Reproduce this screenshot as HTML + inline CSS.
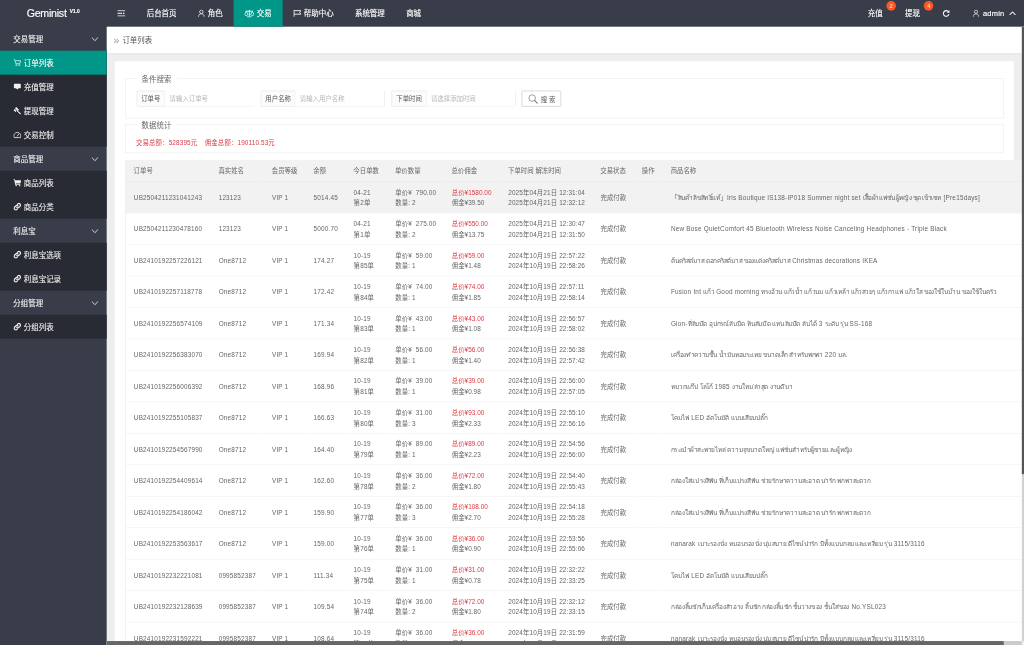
<!DOCTYPE html>
<html lang="zh-CN">
<head>
<meta charset="utf-8">
<title>订单列表</title>
<style>
html,body{margin:0;padding:0;width:1024px;height:645px;overflow:hidden;background:#fff}
#app{position:absolute;left:0;top:0;width:1940px;height:1230px;transform:scale(.5333333);transform-origin:0 0;font-family:"Liberation Sans","Noto Sans CJK SC",sans-serif;font-size:14px;color:#666;overflow:hidden;background:#eee;line-height:1;filter:blur(.45px)}
#app *{box-sizing:border-box}
svg{display:block}
/* header */
.header{position:absolute;left:0;top:0;width:1940px;height:50px;background:#393d49;color:#fff;-webkit-text-stroke:.25px #fff}
.logo{position:absolute;left:0;top:0;width:200px;height:50px;line-height:50px;color:#fff;font-size:20px;white-space:nowrap}
.logo b{position:absolute;left:50px;top:0;font-weight:normal;letter-spacing:-.5px}
.logo sup{position:absolute;left:131px;top:17px;font-size:9px;font-weight:bold;line-height:9px}
.nav{position:absolute;left:200px;top:0;height:50px;display:flex}
.nav .it{height:50px;line-height:50px;padding:0 20px;color:#fff;font-size:14px;white-space:nowrap;display:flex;align-items:center}
.nav .it svg{margin-right:6px}
.nav .it.on{background:#009688}
.rnav .t{position:absolute;top:0;height:50px;line-height:50px;color:#fff;font-size:14px;white-space:nowrap}
.badge{position:absolute;top:2px;width:18px;height:18px;border-radius:9px;background:#ff5722;color:rgba(255,255,255,.88);font-size:11px;line-height:18px;text-align:center;-webkit-text-stroke:0}
/* side */
.side{position:absolute;left:0;top:0;padding-top:50px;width:200px;height:1230px;background:#393d49}
.side .p,.side .c{position:relative;height:45px;line-height:45px;font-size:14px;color:rgba(255,255,255,.93);white-space:nowrap;padding-left:25px}
.side .g{background:#282b33}
.side .c{display:flex;align-items:center}
.side .c svg{margin-right:4.500px}
.side span{position:relative;top:1px;-webkit-text-stroke:.2px rgba(255,255,255,.9)}
.side .c.on{background:#009688;color:#fff}
.side .p .arr{position:absolute;left:171px;top:19px}
/* body */
.crumb{position:absolute;left:200px;top:50px;width:1716px;height:50px;background:#fff;box-shadow:0 1px 2px rgba(0,0,0,.08);line-height:50px;font-size:14px;color:#555;white-space:nowrap}
.crumb span{position:absolute;left:13px;top:0;color:#999;font-size:20px}
.crumb b{position:absolute;left:29.500px;top:0;font-weight:normal}
.card{position:absolute;left:215px;top:115px;width:1686px;height:1200px;background:#fff}
.fs{position:absolute;left:235px;width:1647px;border:1px solid #e9e9e9}
.fs .lg{position:absolute;left:19.500px;top:-9px;height:20px;line-height:20px;padding:0 10px;background:#fff;font-size:14px;color:#666;white-space:nowrap}
.grp{position:absolute;top:170px;height:30px}
.grp .lab{position:absolute;left:0;top:0;height:30px;line-height:31px;border:1px solid #e0e0e0;background:#fcfcfc;font-size:12px;color:#555;text-align:center;white-space:nowrap;border-radius:2px 0 0 2px}
.grp .inp{position:absolute;top:0;height:30px;line-height:31px;border:1px solid #e0e0e0;border-left:none;background:#fff;font-size:12px;color:#b5b5b5;padding-left:8px;white-space:nowrap;border-radius:0 2px 2px 0}
.btn{position:absolute;left:978px;top:170px;width:74px;height:30px;border:1px solid #bbb;border-radius:2px;background:#fff;font-size:12px;color:#555;line-height:28px;white-space:nowrap}
.btn svg{position:absolute;left:11px;top:4.500px}
.btn span{position:absolute;left:35px;top:1.500px}
.stat{position:absolute;top:260.500px;letter-spacing:.24px;font-size:12px;line-height:14px;color:#de3842;white-space:nowrap}
/* table */
table{position:absolute;left:235px;top:300px;width:1681px;border-collapse:collapse;table-layout:fixed;font-size:12px;color:#666}
.tbg{position:absolute;left:234.500px;top:300px;width:1690px;height:930px;background:#fff;border-left:1px solid #e4e4e4}
.tbg i{position:absolute;left:0;top:0;width:1690px;height:99px;background:#f2f2f2}
th{height:40px;font-weight:normal;text-align:left;padding:3px 0 0 15.500px;white-space:nowrap;border-bottom:1px solid #e9e9e9;color:#666}
td{height:59px;padding:3px 0 0 16px;line-height:20px;white-space:nowrap;border-bottom:1px solid #eee;vertical-align:middle;overflow:hidden}
.red{color:#de3842}
.c1,.c2,.c3,.c4{letter-spacing:.3px}
.c5{letter-spacing:.3px}
.c6{letter-spacing:.25px}
.c8{letter-spacing:.22px}
.c7{letter-spacing:.06px}
.c11{letter-spacing:.39px}
/* scrollbars */
.vs{position:absolute;left:1916px;top:50px;width:4px;height:1160px;background:#d2d2d2}
.vs i{position:absolute;left:0;top:0;width:4px;height:839px;background:#555}
.hs{position:absolute;left:200px;top:1202px;width:1716px;height:8px;background:#cbcbcb}
.hs i{position:absolute;left:0;top:0;width:1682px;height:8px;background:#666}
.cn{position:absolute;left:1916px;top:1202px;width:4px;height:8px;background:#eee}
</style>
</head>
<body>
<div id="app">

<div class="card"></div>

<div class="fs" style="top:147px;height:75px"><div class="lg">条件搜索</div></div>
<div class="grp" style="left:255.500px"><div class="lab" style="width:54.500px">订单号</div><div class="inp" style="left:54.500px;width:167px">请输入订单号</div></div>
<div class="grp" style="left:489px"><div class="lab" style="width:65px">用户名称</div><div class="inp" style="left:65px;width:168px">请输入用户名称</div></div>
<div class="grp" style="left:734px"><div class="lab" style="width:66px">下单时间</div><div class="inp" style="left:66px;width:167px">请选择添加时间</div></div>
<div class="btn"><svg width="19" height="19" viewBox="0 0 17 17"><circle cx="7" cy="7" r="5.500" fill="none" stroke="#777" stroke-width="1.200"/><path d="M11 11l4.500 4.500" stroke="#777" stroke-width="1.900" stroke-linecap="round"/></svg><span>搜 索</span></div>

<div class="fs" style="top:233px;height:54px"><div class="lg">数据统计</div></div>
<div class="stat" style="left:255px">交易总额：528395元</div>
<div class="stat" style="left:384px">佣金总额：190110.53元</div>

<div class="tbg"><i></i></div>
<table>
<colgroup><col style="width:159px"><col style="width:100px"><col style="width:78px"><col style="width:75px"><col style="width:78px"><col style="width:106px"><col style="width:106px"><col style="width:173px"><col style="width:78px"><col style="width:54px"><col></colgroup>
<thead><tr><th>订单号</th><th>真实姓名</th><th>会员等级</th><th>余额</th><th>今日单数</th><th>单价数量</th><th>总价佣金</th><th>下单时间 解冻时间</th><th>交易状态</th><th>操作</th><th>商品名称</th></tr></thead>
<tbody>
<tr class="hov"><td class="c1">UB2504211231041243</td><td class="c2">123123</td><td class="c3">VIP 1</td><td class="c4">5014.45</td><td class="c5">04-21<br>第2单</td><td class="c6">单价¥&nbsp; 790.00<br>数量: 2</td><td class="c7"><span class="red">总价¥1580.00</span><br>佣金¥39.50</td><td class="c8">2025年04月21日 12:31:04<br>2025年04月21日 12:32:12</td><td class="c9">完成付款</td><td class="c10"></td><td class="c11">「<span class="th" style="letter-spacing:-0.24px">สินค้าลิขสิทธิ์แท้</span>」Iris Boutique IS138-IP018 Summer night set <span class="th" style="letter-spacing:-0.24px">เสื้อผ้าแฟชั่นผู้หญิง ชุดเข้าเซท</span> [Pre15days]</td></tr>
<tr><td class="c1">UB2504211230478160</td><td class="c2">123123</td><td class="c3">VIP 1</td><td class="c4">5000.70</td><td class="c5">04-21<br>第1单</td><td class="c6">单价¥&nbsp; 275.00<br>数量: 2</td><td class="c7"><span class="red">总价¥550.00</span><br>佣金¥13.75</td><td class="c8">2025年04月21日 12:30:47<br>2025年04月21日 12:31:50</td><td class="c9">完成付款</td><td class="c10"></td><td class="c11">New Bose QuietComfort 45 Bluetooth Wireless Noise Canceling Headphones - Triple Black</td></tr>
<tr><td class="c1">UB2410192257226121</td><td class="c2">One8712</td><td class="c3">VIP 1</td><td class="c4">174.27</td><td class="c5">10-19<br>第85单</td><td class="c6">单价¥&nbsp; 59.00<br>数量: 1</td><td class="c7"><span class="red">总价¥59.00</span><br>佣金¥1.48</td><td class="c8">2024年10月19日 22:57:22<br>2024年10月19日 22:58:26</td><td class="c9">完成付款</td><td class="c10"></td><td class="c11"><span class="th" style="letter-spacing:-0.503px">ต้นคริสต์มาส ดอกคริสต์มาส ของแต่งคริสต์มาส</span> Christmas decorations IKEA</td></tr>
<tr><td class="c1">UB2410192257118778</td><td class="c2">One8712</td><td class="c3">VIP 1</td><td class="c4">172.42</td><td class="c5">10-19<br>第84单</td><td class="c6">单价¥&nbsp; 74.00<br>数量: 1</td><td class="c7"><span class="red">总价¥74.00</span><br>佣金¥1.85</td><td class="c8">2024年10月19日 22:57:11<br>2024年10月19日 22:58:14</td><td class="c9">完成付款</td><td class="c10"></td><td class="c11">Fusion Int <span class="th" style="letter-spacing:-0.408px">แก้ว</span> Good morning <span class="th" style="letter-spacing:-0.408px">ทรงอ้วน แก้วน้ำ แก้วนม แก้วเหล้า แก้วสวยๆ แก้วกาแฟ แก้วใส ของใช้ในบ้าน ของใช้ในครัว</span></td></tr>
<tr><td class="c1">UB2410192256574109</td><td class="c2">One8712</td><td class="c3">VIP 1</td><td class="c4">171.34</td><td class="c5">10-19<br>第83单</td><td class="c6">单价¥&nbsp; 43.00<br>数量: 1</td><td class="c7"><span class="red">总价¥43.00</span><br>佣金¥1.08</td><td class="c8">2024年10月19日 22:56:57<br>2024年10月19日 22:58:02</td><td class="c9">完成付款</td><td class="c10"></td><td class="c11">Gion-<span class="th" style="letter-spacing:-0.315px">ที่ลับมีด อุปกรณ์ลับมีด หินลับมีด แท่นลับมีด ลับได้</span> 3 <span class="th" style="letter-spacing:-0.315px">ระดับ รุ่น</span> SS-168</td></tr>
<tr><td class="c1">UB2410192256383070</td><td class="c2">One8712</td><td class="c3">VIP 1</td><td class="c4">169.94</td><td class="c5">10-19<br>第82单</td><td class="c6">单价¥&nbsp; 56.00<br>数量: 1</td><td class="c7"><span class="red">总价¥56.00</span><br>佣金¥1.40</td><td class="c8">2024年10月19日 22:56:38<br>2024年10月19日 22:57:42</td><td class="c9">完成付款</td><td class="c10"></td><td class="c11"><span class="th" style="letter-spacing:-0.417px">เครื่องทำความชื้น น้ำมันหอมระเหย ขนาดเล็ก สำหรับพกพา</span> 220 <span class="th" style="letter-spacing:-0.417px">มล</span>.</td></tr>
<tr><td class="c1">UB2410192256006392</td><td class="c2">One8712</td><td class="c3">VIP 1</td><td class="c4">168.96</td><td class="c5">10-19<br>第81单</td><td class="c6">单价¥&nbsp; 39.00<br>数量: 1</td><td class="c7"><span class="red">总价¥39.00</span><br>佣金¥0.98</td><td class="c8">2024年10月19日 22:56:00<br>2024年10月19日 22:57:05</td><td class="c9">完成付款</td><td class="c10"></td><td class="c11"><span class="th" style="letter-spacing:-0.346px">หมวกแก๊ป โลโก้</span> 1985 <span class="th" style="letter-spacing:-0.346px">งานใหม่ล่าสุด งานดีมา</span></td></tr>
<tr><td class="c1">UB2410192255105837</td><td class="c2">One8712</td><td class="c3">VIP 1</td><td class="c4">166.63</td><td class="c5">10-19<br>第80单</td><td class="c6">单价¥&nbsp; 31.00<br>数量: 3</td><td class="c7"><span class="red">总价¥93.00</span><br>佣金¥2.33</td><td class="c8">2024年10月19日 22:55:10<br>2024年10月19日 22:56:16</td><td class="c9">完成付款</td><td class="c10"></td><td class="c11"><span class="th" style="letter-spacing:-0.338px">โคมไฟ</span> LED <span class="th" style="letter-spacing:-0.338px">อัตโนมัติ แบบเสียบปลั๊ก</span></td></tr>
<tr><td class="c1">UB2410192254567990</td><td class="c2">One8712</td><td class="c3">VIP 1</td><td class="c4">164.40</td><td class="c5">10-19<br>第79单</td><td class="c6">单价¥&nbsp; 89.00<br>数量: 1</td><td class="c7"><span class="red">总价¥89.00</span><br>佣金¥2.23</td><td class="c8">2024年10月19日 22:54:56<br>2024年10月19日 22:56:00</td><td class="c9">完成付款</td><td class="c10"></td><td class="c11"><span class="th" style="letter-spacing:-0.33px">กระเป๋าผ้าสะพายไหล่ ความจุขนาดใหญ่ แฟชั่นสำหรับผู้ชายและผู้หญิง</span></td></tr>
<tr><td class="c1">UB2410192254409614</td><td class="c2">One8712</td><td class="c3">VIP 1</td><td class="c4">162.60</td><td class="c5">10-19<br>第78单</td><td class="c6">单价¥&nbsp; 36.00<br>数量: 2</td><td class="c7"><span class="red">总价¥72.00</span><br>佣金¥1.80</td><td class="c8">2024年10月19日 22:54:40<br>2024年10月19日 22:55:43</td><td class="c9">完成付款</td><td class="c10"></td><td class="c11"><span class="th" style="letter-spacing:-0.283px">กล่องใส่แปรงสีฟัน ที่เก็บแปรงสีฟัน ช่วยรักษาความสะอาด น่ารัก พกพาสะดวก</span></td></tr>
<tr><td class="c1">UB2410192254186042</td><td class="c2">One8712</td><td class="c3">VIP 1</td><td class="c4">159.90</td><td class="c5">10-19<br>第77单</td><td class="c6">单价¥&nbsp; 36.00<br>数量: 3</td><td class="c7"><span class="red">总价¥108.00</span><br>佣金¥2.70</td><td class="c8">2024年10月19日 22:54:18<br>2024年10月19日 22:55:28</td><td class="c9">完成付款</td><td class="c10"></td><td class="c11"><span class="th" style="letter-spacing:-0.283px">กล่องใส่แปรงสีฟัน ที่เก็บแปรงสีฟัน ช่วยรักษาความสะอาด น่ารัก พกพาสะดวก</span></td></tr>
<tr><td class="c1">UB2410192253563617</td><td class="c2">One8712</td><td class="c3">VIP 1</td><td class="c4">159.00</td><td class="c5">10-19<br>第76单</td><td class="c6">单价¥&nbsp; 36.00<br>数量: 1</td><td class="c7"><span class="red">总价¥36.00</span><br>佣金¥0.90</td><td class="c8">2024年10月19日 22:53:56<br>2024年10月19日 22:55:06</td><td class="c9">完成付款</td><td class="c10"></td><td class="c11">nanarak <span class="th" style="letter-spacing:-0.262px">เบาะรองนั่ง หมอนรองนั่ง นุ่มสบาย ดีไซน์น่ารัก มีทั้งแบบกลมและเหลี่ยม รุ่น</span> 3115/3116</td></tr>
<tr><td class="c1">UB2410192232221081</td><td class="c2">0995852387</td><td class="c3">VIP 1</td><td class="c4">111.34</td><td class="c5">10-19<br>第75单</td><td class="c6">单价¥&nbsp; 31.00<br>数量: 1</td><td class="c7"><span class="red">总价¥31.00</span><br>佣金¥0.78</td><td class="c8">2024年10月19日 22:32:22<br>2024年10月19日 22:33:25</td><td class="c9">完成付款</td><td class="c10"></td><td class="c11"><span class="th" style="letter-spacing:-0.338px">โคมไฟ</span> LED <span class="th" style="letter-spacing:-0.338px">อัตโนมัติ แบบเสียบปลั๊ก</span></td></tr>
<tr><td class="c1">UB2410192232128639</td><td class="c2">0995852387</td><td class="c3">VIP 1</td><td class="c4">109.54</td><td class="c5">10-19<br>第74单</td><td class="c6">单价¥&nbsp; 36.00<br>数量: 2</td><td class="c7"><span class="red">总价¥72.00</span><br>佣金¥1.80</td><td class="c8">2024年10月19日 22:32:12<br>2024年10月19日 22:33:15</td><td class="c9">完成付款</td><td class="c10"></td><td class="c11"><span class="th" style="letter-spacing:-0.265px">กล่องลิ้นชักเก็บเครื่องสำอาง ลิ้นชัก กล่องลิ้นชัก ชั้นวางของ ชั้นใส่ของ</span> No.YSL023</td></tr>
<tr><td class="c1">UB2410192231592221</td><td class="c2">0995852387</td><td class="c3">VIP 1</td><td class="c4">108.64</td><td class="c5">10-19<br>第73单</td><td class="c6">单价¥&nbsp; 36.00<br>数量: 1</td><td class="c7"><span class="red">总价¥36.00</span><br>佣金¥0.90</td><td class="c8">2024年10月19日 22:31:59<br>2024年10月19日 22:33:03</td><td class="c9">完成付款</td><td class="c10"></td><td class="c11">nanarak <span class="th" style="letter-spacing:-0.262px">เบาะรองนั่ง หมอนรองนั่ง นุ่มสบาย ดีไซน์น่ารัก มีทั้งแบบกลมและเหลี่ยม รุ่น</span> 3115/3116</td></tr>
</tbody>
</table>

<div class="crumb"><span>»</span><b>订单列表</b></div>

<div class="side">
<div class="p"><span>交易管理</span><svg class="arr" width="14" height="9" viewBox="0 0 14 9"><path d="M1 1.200l6 6 6-6" fill="none" stroke="#e4e4e6" stroke-width="1.700"/></svg></div>
<div class="g">
<div class="c on"><svg width="15" height="15" viewBox="0 0 15 15"><path d="M0.500 1.800h2.300l2 7.700h7.300l1.700-5.700h-10" fill="none" stroke="#fff" stroke-width="1.300" stroke-linejoin="round"/><circle cx="5.600" cy="12.300" r="1.200" fill="none" stroke="#fff" stroke-width="1.100"/><circle cx="11.200" cy="12.300" r="1.200" fill="none" stroke="#fff" stroke-width="1.100"/></svg><span>订单列表</span></div>
<div class="c"><svg width="15" height="15" viewBox="0 0 15 15"><path d="M1.800 2h11.400a0.800 0.800 0 0 1 0.800 0.800v6.900a0.800 0.800 0 0 1-0.800 0.800h-3.200l-2.500 2.300-2.500-2.300h-3.200a0.800 0.800 0 0 1-0.800-0.800v-6.900a0.800 0.800 0 0 1 0.800-0.800z" fill="#f0f0f1"/></svg><span>充值管理</span></div>
<div class="c"><svg width="15" height="15" viewBox="0 0 15 15"><path d="M5.600 0.600l5 5-2.600 2.600-5-5zM7.600 6.800l7 6.400-1.600 1.600-6.600-6.800zM0.400 6.600l2.400-2.400 3.400 3.400-2.400 2.400z" fill="#f0f0f1"/></svg><span>提现管理</span></div>
<div class="c"><svg width="15" height="15" viewBox="0 0 15 15"><path d="M1.500 13a6.700 6.700 0 1 1 12 0z" fill="none" stroke="#f0f0f1" stroke-width="1.500" stroke-linejoin="round"/><path d="M7.300 10.200l3.400-4.400" stroke="#f0f0f1" stroke-width="1.500" stroke-linecap="round"/></svg><span>交易控制</span></div>
</div>
<div class="p"><span>商品管理</span><svg class="arr" width="14" height="9" viewBox="0 0 14 9"><path d="M1 1.200l6 6 6-6" fill="none" stroke="#e4e4e6" stroke-width="1.700"/></svg></div>
<div class="g">
<div class="c"><svg width="15" height="15" viewBox="0 0 15 15"><path d="M0.200 1.200h2.700l0.500 1.700h11.400l-1.500 6.200h-8.600l0.300 1.200h8.200v1.400h-9.500l-2.100-9.100h-1.400z" fill="#f0f0f1"/><circle cx="5.300" cy="13.300" r="1.300" fill="#f0f0f1"/><circle cx="11.900" cy="13.300" r="1.300" fill="#f0f0f1"/></svg><span>商品列表</span></div>
<div class="c"><svg width="15" height="15" viewBox="0 0 15 15"><g fill="none" stroke="#f0f0f1" stroke-width="2.200" stroke-linecap="round"><path d="M6.300 8.700a3 3 0 0 0 4.200 0l2.300-2.300a3 3 0 0 0-4.200-4.200l-1.100 1.100"/><path d="M8.700 6.300a3 3 0 0 0-4.200 0l-2.300 2.300a3 3 0 0 0 4.200 4.200l1.100-1.100"/></g></svg><span>商品分类</span></div>
</div>
<div class="p"><span>利息宝</span><svg class="arr" width="14" height="9" viewBox="0 0 14 9"><path d="M1 1.200l6 6 6-6" fill="none" stroke="#e4e4e6" stroke-width="1.700"/></svg></div>
<div class="g">
<div class="c"><svg width="15" height="15" viewBox="0 0 15 15"><g fill="none" stroke="#f0f0f1" stroke-width="2.200" stroke-linecap="round"><path d="M6.300 8.700a3 3 0 0 0 4.200 0l2.300-2.300a3 3 0 0 0-4.200-4.200l-1.100 1.100"/><path d="M8.700 6.300a3 3 0 0 0-4.200 0l-2.300 2.300a3 3 0 0 0 4.200 4.200l1.100-1.100"/></g></svg><span>利息宝选项</span></div>
<div class="c"><svg width="15" height="15" viewBox="0 0 15 15"><g fill="none" stroke="#f0f0f1" stroke-width="2.200" stroke-linecap="round"><path d="M6.300 8.700a3 3 0 0 0 4.200 0l2.300-2.300a3 3 0 0 0-4.200-4.200l-1.100 1.100"/><path d="M8.700 6.300a3 3 0 0 0-4.200 0l-2.300 2.300a3 3 0 0 0 4.200 4.200l1.100-1.100"/></g></svg><span>利息宝记录</span></div>
</div>
<div class="p"><span>分组管理</span><svg class="arr" width="14" height="9" viewBox="0 0 14 9"><path d="M1 1.200l6 6 6-6" fill="none" stroke="#e4e4e6" stroke-width="1.700"/></svg></div>
<div class="g">
<div class="c"><svg width="15" height="15" viewBox="0 0 15 15"><g fill="none" stroke="#f0f0f1" stroke-width="2.200" stroke-linecap="round"><path d="M6.300 8.700a3 3 0 0 0 4.200 0l2.300-2.300a3 3 0 0 0-4.200-4.200l-1.100 1.100"/><path d="M8.700 6.300a3 3 0 0 0-4.200 0l-2.300 2.300a3 3 0 0 0 4.200 4.200l1.100-1.100"/></g></svg><span>分组列表</span></div>
</div>
</div>

<div class="header">
<div class="logo"><b>Geminist</b><sup>V1.0</sup></div>
<div class="nav">
<div class="it"><svg style="margin:0" width="15" height="12" viewBox="0 0 15 12"><path d="M0 1h15M0 6h9M0 11h15" stroke="#fff" stroke-width="1.8"/><path d="M11 4l3 2-3 2z" fill="#fff"/></svg></div>
<div class="it">后台首页</div>
<div class="it"><svg style="margin-right:5.5px" width="13" height="14" viewBox="0 0 13 14"><circle cx="6.5" cy="4.2" r="3.2" fill="none" stroke="#fff" stroke-width="1.4"/><path d="M1 13.5c0-3.4 2.2-5.6 5.5-5.6s5.5 2.2 5.5 5.6" fill="none" stroke="#fff" stroke-width="1.4"/></svg>角色</div>
<div class="it on"><svg style="margin-right:5px" width="19" height="15" viewBox="0 0 19 15"><g fill="none" stroke="#fff" stroke-width="1.500" stroke-linejoin="round"><path d="M9.500 0.500v12.500M5 13.800h9M2.500 3h14" stroke-width="1.700"/><path d="M0.900 9l2.900-5.800 2.900 5.800a3 3 0 0 1-5.800 0zM12.300 9l2.900-5.800 2.900 5.800a3 3 0 0 1-5.800 0z"/></g></svg>交易</div>
<div class="it"><svg style="margin-right:4.500px" width="15.500" height="14" viewBox="0 0 16 14"><path d="M1.300 0.300v13.400" fill="none" stroke="#fff" stroke-width="1.800"/><path d="M1.500 1.800h13l-2.300 3.400 2.300 3.400h-13" fill="none" stroke="#fff" stroke-width="1.700"/></svg>帮助中心</div>
<div class="it">系统管理</div>
<div class="it">商城</div>
</div>
<div class="rnav">
<div class="t" style="left:1627px">充值</div><div class="badge" style="left:1662px">2</div>
<div class="t" style="left:1697px">提现</div><div class="badge" style="left:1732px">4</div>
<svg style="position:absolute;left:1767px;top:18px" width="14" height="14" viewBox="0 0 14 14"><path d="M11.500 4.200a5.300 5.300 0 1 0 0.800 4.300" fill="none" stroke="#fff" stroke-width="2"/><path d="M13.300 0.800v5h-5z" fill="#fff"/></svg>
<svg style="position:absolute;left:1824px;top:18px" width="12" height="14" viewBox="0 0 12 14"><circle cx="6" cy="4" r="3" fill="none" stroke="#fff" stroke-width="1.300"/><path d="M0.800 13.500c0-3.400 2-5.500 5.200-5.500s5.200 2.100 5.200 5.500" fill="none" stroke="#fff" stroke-width="1.300"/></svg>
<div class="t" style="left:1843px;letter-spacing:.45px">admin</div>
<svg style="position:absolute;left:1892px;top:21px" width="13" height="8" viewBox="0 0 13 8"><path d="M1 7l5.500-5.500L12 7" fill="none" stroke="#f4f4f4" stroke-width="1.900"/></svg>
</div>
</div>

<div class="vs"><i></i></div>
<div class="hs"><i></i></div>
<div class="cn"></div>
</div>
</body>
</html>
